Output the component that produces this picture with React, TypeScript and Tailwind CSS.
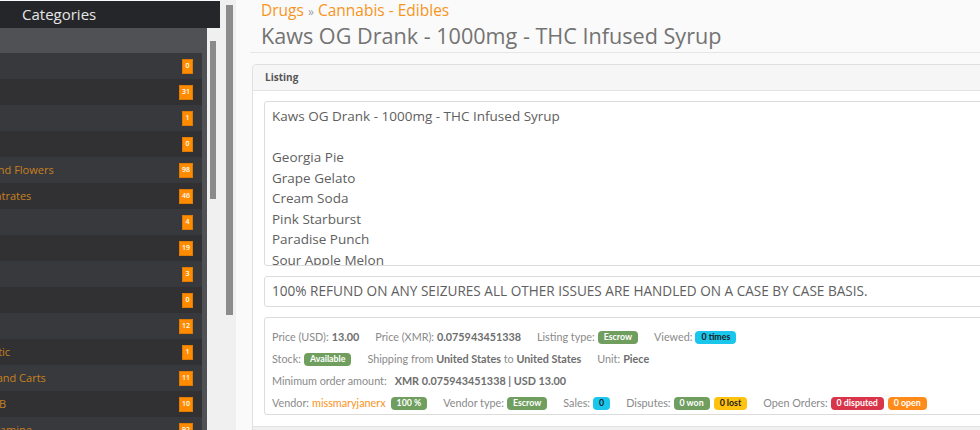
import React from 'react';

type Cat = { name: string; count: number; depth: 0 | 1 | 2 };

const categories: Cat[] = [
  { name: 'Benzos', count: 0, depth: 0 },
  { name: 'Cannabis', count: 31, depth: 0 },
  { name: 'Pills', count: 1, depth: 0 },
  { name: 'Other', count: 0, depth: 0 },
  { name: 'Buds and Flowers', count: 98, depth: 1 },
  { name: 'Concentrates', count: 46, depth: 1 },
  { name: 'Edibles', count: 4, depth: 1 },
  { name: 'Hash', count: 19, depth: 1 },
  { name: 'Pollen', count: 3, depth: 1 },
  { name: 'Seeds', count: 0, depth: 1 },
  { name: 'Shake', count: 12, depth: 1 },
  { name: 'Synthetic', count: 1, depth: 1 },
  { name: 'Vapes and Carts', count: 11, depth: 1 },
  { name: 'GHB', count: 10, depth: 2 },
  { name: 'Ketamine', count: 92, depth: 2 },
];

// the list is scrolled sideways, so names start left of the visible edge
const indent = { 0: '-ml-[60px]', 1: '-ml-[37px]', 2: '-ml-[17px]' };

const flavours = [
  'Georgia Pie',
  'Grape Gelato',
  'Cream Soda',
  'Pink Starburst',
  'Paradise Punch',
  'Sour Apple Melon',
  'Blue Razz',
];

const Badge: React.FC<{ color: string; children: React.ReactNode }> = ({ color, children }) => (
  <span className={`inline-flex items-center h-[13px] px-[6px] rounded-[4px] text-[8.8px] font-bold leading-none ${color}`}>
    {children}
  </span>
);

const Item: React.FC<{ label: string; children: React.ReactNode }> = ({ label, children }) => (
  <span className="flex items-center gap-[3px] mr-[16px]">
    <span>{label}</span>
    {children}
  </span>
);

const Sidebar: React.FC = () => (
  <div className="flex flex-col w-[220px] shrink-0">
    <div className="h-[27px] mt-px bg-[#252629] flex items-center">
      <span className="ml-[22px] text-[15px] text-[#e6e6e6]">Categories</span>
    </div>
    <div className="flex flex-1 min-h-0">
      <div className="w-[207px] bg-[#4f5155] pt-[25px] overflow-hidden">
        {categories.map((c, i) => (
          <div
            key={c.name}
            className={`w-[202px] h-[26px] flex items-center justify-between pr-[9px] overflow-hidden ${
              i % 2 === 0 ? 'bg-[#38393c]' : 'bg-[#313134]'
            }`}
          >
            <span className={`${indent[c.depth]} whitespace-nowrap text-[11px] text-[#c8811f]`}>{c.name}</span>
            <span className="min-w-[11px] h-[15px] px-[2px] flex items-center justify-center bg-[#ff8c00] border border-[#e07a00] text-white text-[7px] font-semibold">
              {c.count}
            </span>
          </div>
        ))}
      </div>
      <div className="w-[13px] bg-[#f0f0f0] pt-[13px] pl-[3px]">
        <div className="w-[6px] h-[158px] bg-[#8a8a8a]" />
      </div>
    </div>
  </div>
);

export default function App() {
  return (
    <div className="w-[980px] h-[430px] overflow-hidden flex bg-[#fafafa]" style={{ fontFamily: '"Open Sans", sans-serif' }}>
      <Sidebar />
      <div className="w-[16px] shrink-0 bg-[#f0f0f0] pt-[5px] pl-[6px]">
        <div className="w-[7px] h-[310px] bg-[#8c8c8c]" />
      </div>
      <main className="flex-1 min-w-0 overflow-hidden pl-[14px]">
        <div className="w-[760px]">
          <div className="pl-[11px] pb-[2px] border-b border-[#e6e6e6]">
            <div className="text-[15.5px] leading-[20px] text-[#f7941d]">
              Drugs <span className="text-[12px] text-[#a0a0a0]">»</span> Cannabis - Edibles
            </div>
            <h1 className="text-[21.6px] leading-[28px] text-[#737373]">Kaws OG Drank - 1000mg - THC Infused Syrup</h1>
          </div>

          <section className="mt-[11px] ml-[2px] border border-[#e0e0e0] rounded-[4px] bg-white">
            <div className="h-[26px] flex items-center pl-[12px] bg-[#f6f6f6] border-b border-[#e3e3e3] rounded-t-[4px]">
              <span className="text-[10px] font-bold text-[#555]">Listing</span>
            </div>
            <div className="px-[11px] pt-[10px] pb-[11px]">
              <div className="h-[165px] overflow-hidden border border-[#dcdcdc] rounded-[3px] pl-[7px] pt-[4px] text-[13.5px] leading-[20.5px] text-[#606060]">
                <div>Kaws OG Drank - 1000mg - THC Infused Syrup</div>
                <div>&nbsp;</div>
                {flavours.map((f) => (
                  <div key={f}>{f}</div>
                ))}
              </div>

              <div className="mt-[10px] h-[31px] flex items-center border border-[#dcdcdc] rounded-[3px] pl-[7px] text-[13.6px] text-[#606060]">
                100% REFUND ON ANY SEIZURES ALL OTHER ISSUES ARE HANDLED ON A CASE BY CASE BASIS.
              </div>

              <div
                className="mt-[10px] border border-[#dcdcdc] rounded-[3px] pl-[7px] pt-[8px] text-[10.8px] text-[#8a8a8a]"
                style={{ fontFamily: 'Lato, sans-serif' }}
              >
                <div className="h-[22px] flex items-center">
                  <Item label="Price (USD):">
                    <b className="text-[#6e6e6e]">13.00</b>
                  </Item>
                  <Item label="Price (XMR):">
                    <b className="text-[#6e6e6e]">0.075943451338</b>
                  </Item>
                  <Item label="Listing type:">
                    <Badge color="bg-[#6f9e5f] text-white">Escrow</Badge>
                  </Item>
                  <Item label="Viewed:">
                    <Badge color="bg-[#1bc6ec] text-[#1a1a1a]">0 times</Badge>
                  </Item>
                </div>
                <div className="h-[22px] flex items-center">
                  <Item label="Stock:">
                    <Badge color="bg-[#6f9e5f] text-white">Available</Badge>
                  </Item>
                  <span className="mr-[16px]">
                    Shipping from <b className="text-[#6e6e6e]">United States</b> to{' '}
                    <b className="text-[#6e6e6e]">United States</b>
                  </span>
                  <Item label="Unit:">
                    <b className="text-[#6e6e6e]">Piece</b>
                  </Item>
                </div>
                <div className="h-[22px] flex items-center">
                  <span className="mr-[8px]">Minimum order amount:</span>
                  <b className="text-[#6e6e6e]">XMR 0.075943451338 | USD 13.00</b>
                </div>
                <div className="h-[22px] flex items-center">
                  <Item label="Vendor:">
                    <span className="text-[#f7941d]">missmaryjanerx</span>
                    <Badge color="bg-[#6f9e5f] text-white ml-[2px]">100 %</Badge>
                  </Item>
                  <Item label="Vendor type:">
                    <Badge color="bg-[#6f9e5f] text-white">Escrow</Badge>
                  </Item>
                  <Item label="Sales:">
                    <Badge color="bg-[#1bc6ec] text-[#1a1a1a]">0</Badge>
                  </Item>
                  <Item label="Disputes:">
                    <Badge color="bg-[#6f9e5f] text-white">0 won</Badge>
                    <Badge color="bg-[#ffc20e] text-[#1a1a1a] ml-px">0 lost</Badge>
                  </Item>
                  <Item label="Open Orders:">
                    <Badge color="bg-[#d8344a] text-white">0 disputed</Badge>
                    <Badge color="bg-[#ff8c1a] text-white ml-px">0 open</Badge>
                  </Item>
                </div>
              </div>
            </div>
            <div className="h-[8px] bg-[#f0f0f0] border-t border-[#e3e3e3]" />
          </section>
        </div>
      </main>
    </div>
  );
}
